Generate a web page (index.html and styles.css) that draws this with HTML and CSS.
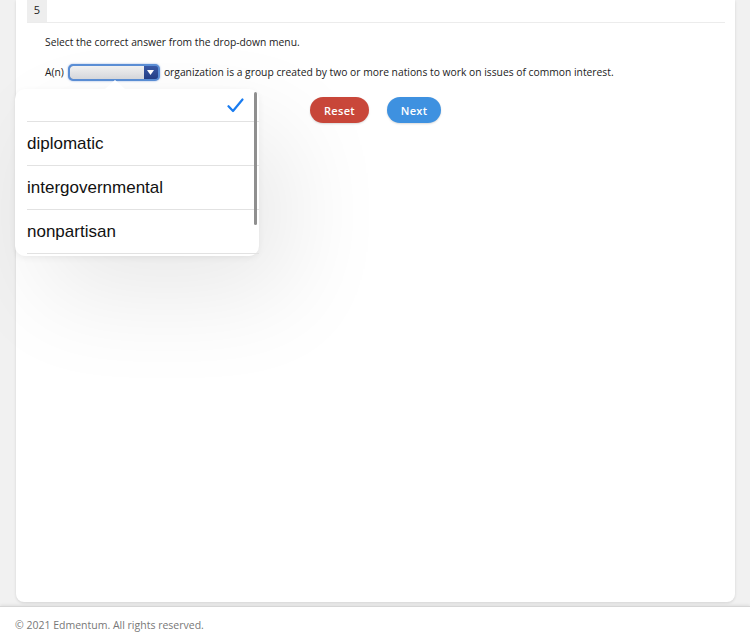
FILE: index.html
```html
<!DOCTYPE html>
<html>
<head>
<meta charset="utf-8">
<link rel="stylesheet" href="styles.css">
</head>
<body>
<div class="page">
  <main class="card">
    <div class="qhead"><span class="qnum">5</span></div>
    <p class="instr">Select the correct answer from the drop-down menu.</p>
    <p class="stem">A(n) <span class="select"><span class="select-field"></span><span class="select-btn"><svg width="7" height="5" viewBox="0 0 7 5"><path d="M0 0H7L3.5 5Z" fill="#fff"/></svg></span></span> organization is a group created by two or more nations to work on issues of common interest.</p>
    <div class="actions">
      <button class="btn reset">Reset</button>
      <button class="btn next">Next</button>
    </div>
  </main>
  <footer class="footer">© 2021 Edmentum. All rights reserved.</footer>
  <div class="picker">
    <div class="picker-arrow"></div>
    <div class="picker-list">
      <div class="opt check-row"><svg width="17" height="15" viewBox="0 0 17 15"><path d="M1.5 8.2L6 13L15.5 1.5" fill="none" stroke="#1a7cf0" stroke-width="2.2" stroke-linecap="round" stroke-linejoin="round"/></svg></div>
      <div class="opt">diplomatic</div>
      <div class="opt">intergovernmental</div>
      <div class="opt">nonpartisan</div>
    </div>
    <div class="scrollbar"></div>
  </div>
</div>
</body>
</html>
```
FILE: styles.css
```css
html, body {
  margin: 0;
  padding: 0;
}
body {
  background: #f1f1f1;
  font-family: "Open Sans", "Liberation Sans", sans-serif;
  color: #222;
  width: 750px;
  height: 640px;
  overflow: hidden;
}
.page {
  position: relative;
  height: 640px;
  display: flex;
  flex-direction: column;
}
.card {
  flex-shrink: 0;
  margin-left: 16px;
  width: 719px;
  height: 602px;
  box-sizing: border-box;
  background: #fff;
  border-radius: 0 0 8px 8px;
  padding: 0 10px 0 11px;
  box-shadow: 0 1px 3px rgba(0,0,0,0.12);
}
.qhead {
  height: 22px;
  border-bottom: 1px solid #ececec;
  display: flex;
}
.qnum {
  width: 20px;
  height: 22px;
  background: #eeeeee;
  font-size: 11px;
  line-height: 20px;
  text-align: center;
  color: #222;
}
.instr {
  margin: 12px 0 0 18px;
  font-size: 10.3px;
  line-height: 14px;
}
.stem {
  margin: 14px 0 0 18px;
  font-size: 10.3px;
  line-height: 18px;
  display: flex;
  align-items: center;
  gap: 4px;
}
.select {
  display: inline-flex;
  width: 92px;
  height: 17px;
  box-sizing: border-box;
  border: 2px solid #5b8fd6;
  border-radius: 5px;
  overflow: hidden;
  background: #3b6ab8;
  box-shadow: 0 0 2px rgba(60,110,200,0.6);
}
.select-field {
  flex: 1;
  background: linear-gradient(#f2f2f2, #d7d9dd);
  border-radius: 3px 0 0 3px;
}
.select-btn {
  width: 14px;
  background: linear-gradient(#3a5aa8, #243f86);
  display: flex;
  align-items: center;
  justify-content: center;
}
.actions {
  margin: 16px 0 0 283px;
  display: flex;
  gap: 18px;
}
.btn {
  height: 26px;
  border: none;
  border-radius: 13px;
  color: #fff;
  font-family: "Open Sans", sans-serif;
  font-size: 11px;
  font-weight: 600;
  letter-spacing: 0.3px;
  padding: 0;
  box-shadow: 0 1px 2px rgba(0,0,0,0.15);
}
.reset {
  width: 59px;
  background: #c9473a;
}
.next {
  width: 54px;
  background: #3e91e0;
}
.footer {
  margin-top: 4px;
  flex: 1;
  background: #fff;
  border-top: 1px solid #d6d6d6;
  box-shadow: 0 -1px 3px rgba(0,0,0,0.08);
  font-size: 10.5px;
  color: #777;
  padding-left: 15px;
  padding-top: 1px;
  line-height: 34px;
}
.picker {
  position: absolute;
  left: 15px;
  top: 89px;
  width: 244px;
  height: 167px;
  background: #fff;
  border-radius: 10px;
  box-shadow: 30px 40px 100px rgba(0,0,0,0.09), 0 2px 6px rgba(0,0,0,0.06);
}
.picker-arrow {
  position: absolute;
  left: 90px;
  top: -9px;
  width: 0;
  height: 0;
  border-left: 10px solid transparent;
  border-right: 10px solid transparent;
  border-bottom: 9px solid #fff;
}
.picker-list {
  padding-left: 12px;
  font-family: "Liberation Sans", Arial, sans-serif;
  font-size: 17px;
  color: #111;
}
.opt {
  height: 42px;
  padding-top: 1px;
  border-bottom: 1px solid #e2e2e2;
  display: flex;
  align-items: center;
}
.check-row {
  height: 32px;
  padding-top: 0;
  justify-content: flex-end;
  padding-right: 15px;
}
.scrollbar {
  position: absolute;
  right: 2px;
  top: 3px;
  width: 3px;
  height: 133px;
  border-radius: 2px;
  background: #8f8f8f;
}
```
